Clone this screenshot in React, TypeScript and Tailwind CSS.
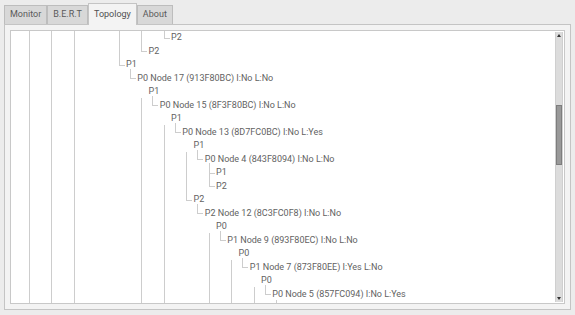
import React from "react";

const rows: [number, string][] = [
  [12, "P2"],
  [10, "P2"],
  [8, "P1"],
  [9, "P0 Node 17 (913F80BC) I:No L:No"],
  [10, "P1"],
  [11, "P0 Node 15 (8F3F80BC) I:No L:No"],
  [12, "P1"],
  [13, "P0 Node 13 (8D7FC0BC) I:No L:Yes"],
  [14, "P1"],
  [15, "P0 Node 4 (843F8094) I:No L:No"],
  [16, "P1"],
  [16, "P2"],
  [14, "P2"],
  [15, "P2 Node 12 (8C3FC0F8) I:No L:No"],
  [16, "P0"],
  [17, "P1 Node 9 (893F80EC) I:No L:No"],
  [18, "P0"],
  [19, "P1 Node 7 (873F80EE) I:Yes L:No"],
  [20, "P0"],
  [21, "P0 Node 5 (857FC094) I:No L:Yes"],
];

const RH = 13.5;
const yc = (i: number) => 6.75 + RH * i;
const lx = (L: number) => Math.floor(18 + 11.25 * L) + 0.5;
const BOTTOM = 280;

type Seg = { L: number; y1: number; y2: number; h?: number[] };

const segs: Seg[] = [
  { L: 0, y1: 0, y2: BOTTOM },
  { L: 2, y1: 0, y2: BOTTOM },
  { L: 4, y1: 0, y2: BOTTOM },
  { L: 8, y1: 0, y2: yc(2), h: [yc(2)] },
  { L: 10, y1: 0, y2: yc(1), h: [yc(1)] },
  { L: 12, y1: 0, y2: yc(0), h: [yc(0)] },
  { L: 9, y1: yc(2) + 4, y2: yc(3), h: [yc(3)] },
  { L: 10, y1: yc(4) + 6, y2: BOTTOM },
  { L: 11, y1: yc(4) + 4, y2: yc(5), h: [yc(5)] },
  { L: 12, y1: yc(6) + 6, y2: BOTTOM },
  { L: 13, y1: yc(6) + 4, y2: yc(7), h: [yc(7)] },
  { L: 14, y1: yc(8) + 6, y2: yc(12), h: [yc(12)] },
  { L: 15, y1: yc(8) + 4, y2: yc(9), h: [yc(9)] },
  { L: 16, y1: yc(9) + 4, y2: yc(11), h: [yc(10), yc(11)] },
  { L: 15, y1: yc(12) + 4, y2: yc(13), h: [yc(13)] },
  { L: 16, y1: yc(14) + 6, y2: BOTTOM },
  { L: 17, y1: yc(14) + 4, y2: yc(15), h: [yc(15)] },
  { L: 18, y1: yc(16) + 6, y2: BOTTOM },
  { L: 19, y1: yc(16) + 4, y2: yc(17), h: [yc(17)] },
  { L: 20, y1: yc(18) + 6, y2: BOTTOM },
  { L: 21, y1: yc(18) + 4, y2: yc(19), h: [yc(19)] },
  { L: 22, y1: yc(19) + 6, y2: BOTTOM },
];

function TreeLines() {
  return (
    <svg className="absolute left-0 top-0" width={544} height={BOTTOM} shapeRendering="crispEdges">
      {segs.map((s, i) => (
        <g key={i} stroke="#cdcdcd" strokeWidth={1}>
          <line x1={lx(s.L)} x2={lx(s.L)} y1={Math.round(s.y1)} y2={Math.round(s.y2) + 0.5} />
          {(s.h || []).map((hy, k) => (
            <line key={k} x1={lx(s.L)} x2={lx(s.L) + 5} y1={Math.round(hy) + 0.5} y2={Math.round(hy) + 0.5} />
          ))}
        </g>
      ))}
    </svg>
  );
}

function Tab({ label, active }: { label: string; active?: boolean }) {
  if (active) {
    return (
      <div className="relative z-10 mb-[-1px] flex h-[22px] items-center border border-b-0 border-[#c4c4c4] bg-[#f3f3f3] px-[5px] text-[9px] text-[#505050]">
        {label}
      </div>
    );
  }
  return (
    <div className="flex h-[19px] items-center border border-b-0 border-[#bdbdbd] bg-[#d8d8d8] px-[5px] text-[9px] text-[#5a5a5a]">
      {label}
    </div>
  );
}

export default function App() {
  return (
    <div className="h-[315px] w-[575px] overflow-hidden bg-[#ececec] font-['Roboto',sans-serif]">
      <div className="flex h-[24px] items-end pl-[4px]">
        <Tab label="Monitor" />
        <Tab label="B.E.R.T" />
        <Tab label="Topology" active />
        <Tab label="About" />
      </div>
      <div className="ml-[4px] h-[286px] w-[567px] border border-[#c4c4c4] bg-[#f3f3f3] p-[5px]">
        <div className="flex h-full border border-[#c8c8c8] bg-white">
          <div className="relative flex-1 overflow-hidden">
            <TreeLines />
            <div className="relative flex flex-col">
              {rows.map(([L, t], i) => (
                <div
                  key={i}
                  className="h-[13.5px] whitespace-nowrap text-[9px] leading-[13.5px] text-[#626262]"
                  style={{ paddingLeft: 25 + 11.25 * L }}
                >
                  {t}
                </div>
              ))}
            </div>
          </div>
          <div className="my-[1px] mr-[1px] flex w-[8px] flex-col items-center border-x border-[#cfcfcf] bg-[#dcdcdc]">
            <div className="mt-[2px] h-0 w-0 border-x-[2px] border-b-[3px] border-x-transparent border-b-[#333]" />
            <div className="mt-[68px] h-[60px] w-[6px] border border-[#7d7d7d] bg-[#999]" />
            <div className="flex-1" />
            <div className="mb-[2px] h-0 w-0 border-x-[2px] border-t-[3px] border-x-transparent border-t-[#333]" />
          </div>
        </div>
      </div>
    </div>
  );
}
